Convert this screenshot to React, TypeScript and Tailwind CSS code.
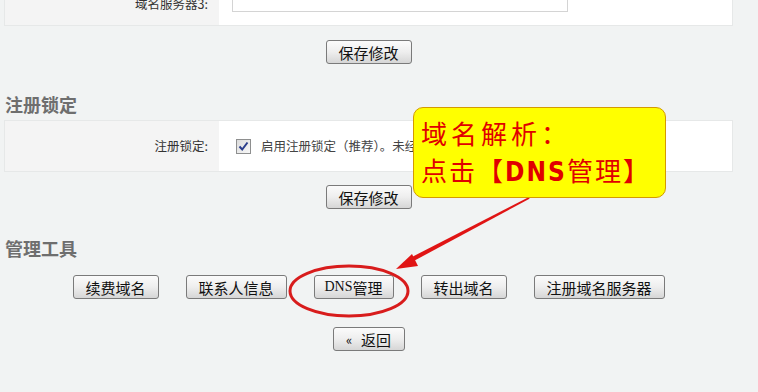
import React from "react";

const Btn = ({ children, w }: { children: React.ReactNode; w: string }) => (
  <button
    className={`h-[24px] ${w} rounded-[3px] border border-[#7a7a7a] bg-gradient-to-b from-[#fbfbfb] via-[#eeeeee] to-[#d6d6d6] text-[15px] leading-none text-[#111] flex items-center justify-center`}
  >
    {children}
  </button>
);

export default function App() {
  return (
    <div
      className="relative w-[758px] h-[392px] overflow-hidden bg-[#f1f3f3]"
      style={{ fontFamily: '"Noto Sans CJK SC", "Liberation Sans", sans-serif' }}
    >
      <div className="ml-[4px] w-[729px] flex flex-col">
        {/* row 1 */}
        <div className="mt-[-26px] h-[52px] flex border border-[#e6e8e8]">
          <div className="w-[214px] bg-[#f4f4f4] flex items-center justify-end pr-[11px] pt-[8px] text-[12.5px] text-[#333]">
            域名服务器3:
          </div>
          <div className="flex-1 bg-white flex items-center pl-[13px]">
            <div className="w-[336px] h-[24px] border border-[#d4d4d4] bg-white" />
          </div>
        </div>
        <div className="mt-[14px] flex justify-center">
          <Btn w="w-[86px]">保存修改</Btn>
        </div>
        <div className="mt-[24px] h-[32px] flex items-center pl-[1px] text-[18px] font-bold text-[#6e6e6e]">
          注册锁定
        </div>
        {/* row 2 */}
        <div className="h-[52px] flex border border-[#e6e8e8]">
          <div className="w-[214px] bg-[#f4f4f4] flex items-center justify-end pr-[11px] text-[12.5px] text-[#333]">
            注册锁定:
          </div>
          <div className="flex-1 bg-white flex items-center pl-[17px] text-[12.5px] text-[#444]">
            <div className="w-[15px] h-[15px] border border-[#8e8f8f] bg-gradient-to-br from-[#dcdcdc] to-[#f8f8f8] flex items-center justify-center">
              <svg width="11" height="11" viewBox="0 0 11 11">
                <path d="M1.5 5.5 L4.2 8.5 L9.5 1.5" fill="none" stroke="#2b3e8c" strokeWidth="2" />
              </svg>
            </div>
            <span className="ml-[10px] whitespace-nowrap">启用注册锁定（推荐）。未经授权的域名转移将被阻止</span>
          </div>
        </div>
        <div className="mt-[13px] flex justify-center">
          <Btn w="w-[86px]">保存修改</Btn>
        </div>
        <div className="mt-[24px] h-[30px] flex items-center pl-[1px] text-[18px] font-bold text-[#6e6e6e]">
          管理工具
        </div>
        <div className="mt-[12px] flex justify-center gap-[27px]">
          <Btn w="w-[86px]">续费域名</Btn>
          <Btn w="w-[101px]">联系人信息</Btn>
          <Btn w="w-[80px]">
            <span style={{ fontFamily: '"Liberation Serif", serif' }} className="text-[14px]">DNS</span>管理
          </Btn>
          <Btn w="w-[86px]">转出域名</Btn>
          <Btn w="w-[131px]">注册域名服务器</Btn>
        </div>
        <div className="mt-[28px] flex justify-center">
          <Btn w="w-[72px]">
            <span className="text-[13px] mr-[9px]">«</span>返回
          </Btn>
        </div>
      </div>

      {/* ellipse + arrow */}
      <svg className="absolute left-0 top-0" width="758" height="392">
        <ellipse cx="349" cy="291" rx="59" ry="25" fill="none" stroke="#d81c1c" strokeWidth="3" />
        <polygon points="531,196 529,199 410,263 408,259" fill="#e01414" />
        <polygon points="396,269 412,254 418,266" fill="#e01414" />
      </svg>

      {/* callout */}
      <div className="absolute left-[413px] top-[107px] w-[253px] h-[91px] rounded-[10px] border border-[#d49a00] bg-[#ffff00] pl-[7px] pt-[6px] text-[26px] leading-[37px] text-[#e00000]">
        <div className="tracking-[4px]">域名解析：</div>
        <div className="whitespace-nowrap tracking-[2px]">
          点击【<span style={{ fontFamily: '"DejaVu Sans Condensed", "Liberation Sans Narrow", sans-serif' }} className="font-bold">DNS</span>管理】
        </div>
      </div>
    </div>
  );
}
